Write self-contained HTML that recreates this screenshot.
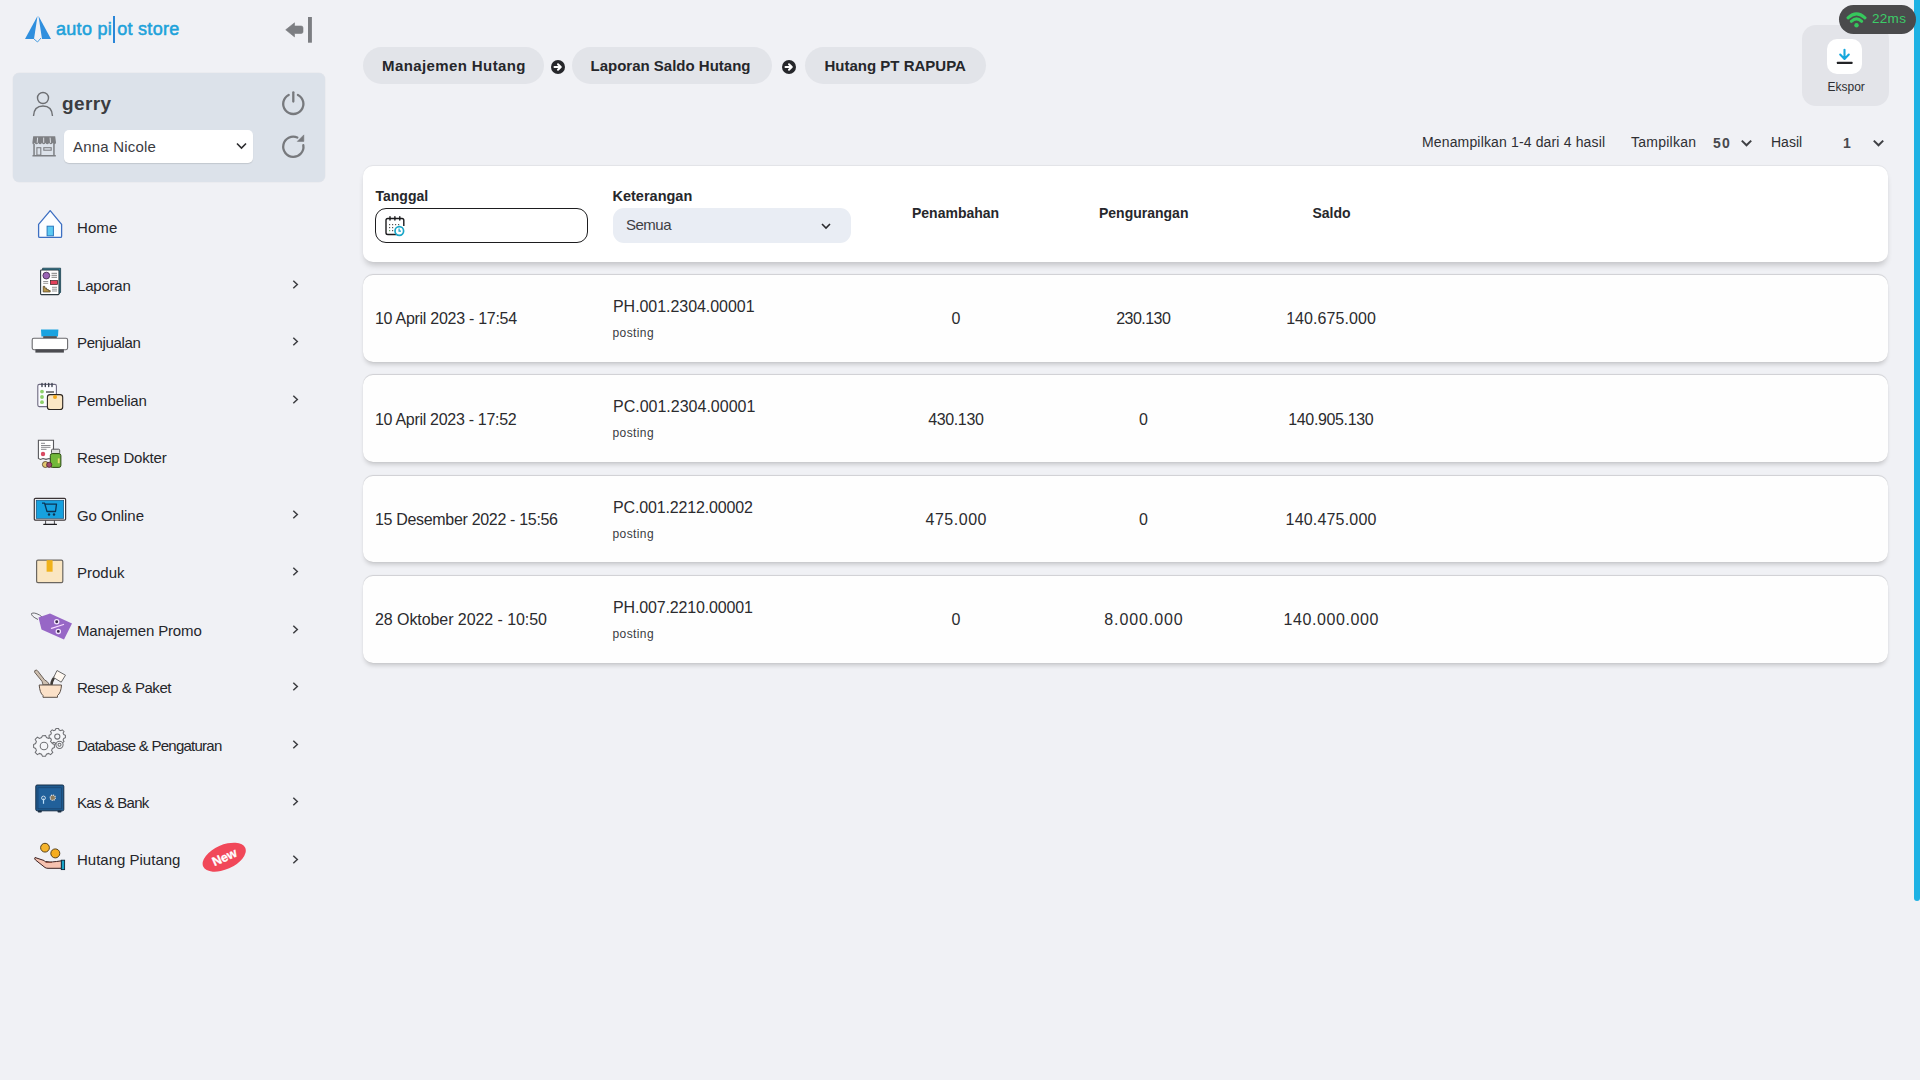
<!DOCTYPE html>
<html><head><meta charset="utf-8">
<style>
*{box-sizing:border-box;margin:0;padding:0}
html,body{width:1920px;height:1080px;overflow:hidden;background:#f0f1f5;font-family:"Liberation Sans",sans-serif;color:#2b2b2e}
.abs{position:absolute}
.t{position:absolute;white-space:nowrap;line-height:1}
/* sidebar */
.userpanel{left:13px;top:73px;width:312px;height:109px;background:#dce2ea;border-radius:6px;box-shadow:0 0 0 0.5px rgba(0,0,0,.04)}
.sel{left:64px;top:130px;width:189px;height:33px;background:#fff;border-radius:5px;box-shadow:0 1px 1px rgba(0,0,0,.12)}
.menu{font-size:15px;color:#25262a}
.chev{position:absolute;left:291px;width:9px;height:9px}
/* main */
.pill{position:absolute;top:47px;height:37px;background:#e2e4e9;border-radius:19px}
.pill span{position:absolute;top:11px;font-weight:700;font-size:15px;line-height:1;color:#26272b;white-space:nowrap}
.arrow{position:absolute;top:59.5px;width:14px;height:14px}
.card{position:absolute;left:363px;width:1525px;background:#fff;border-radius:10px;box-shadow:0 5px 6px -2px rgba(0,0,0,.2),0 -1px 1px rgba(0,0,0,.06)}
.row{background:#fefefe;box-shadow:0 4px 5px -2px rgba(0,0,0,.2),0 -0.5px 1px rgba(0,0,0,.14)}
.hd{font-weight:700;font-size:15px;color:#26272b}
.num{font-size:15px;color:#2b2b2e;text-align:center;width:160px}
</style></head>
<body>
<!-- logo -->
<svg class="abs" style="left:24px;top:15px" width="28" height="30" viewBox="0 0 28 30">
  <path d="M13.5 1 L1 24 L10 24 Z" fill="#2f8fde"/>
  <path d="M14.5 1 L27 24 L18 24 Z" fill="#2f8fde"/>
  <path d="M10 24 L13.5 27 L17 23" stroke="#4a9ee0" stroke-width="1" fill="none"/>
</svg>
<div class="t" style="left:56px;top:19.5px;font-size:18px;color:#1ea2da;font-weight:400;letter-spacing:0.3px;-webkit-text-stroke:0.55px #1ea2da">auto pi<span style="display:inline-block;width:5px;height:1px"></span>ot store</div>
<div class="abs" style="left:112.6px;top:16.3px;width:2px;height:27.2px;background:#2a86d8"></div>
<!-- collapse icon -->
<svg class="abs" style="left:284px;top:16px" width="30" height="28" viewBox="0 0 30 28">
  <path d="M1.7 13.8 L10.5 6.8 L10.5 10 L17.2 10 Q19 10 19 11.8 L19 15.7 Q19 17.5 17.2 17.5 L10.5 17.5 L10.5 20.9 Z" fill="#7c7e82" stroke="#7c7e82" stroke-width="0.6" stroke-linejoin="round"/>
  <rect x="24" y="1" width="3.9" height="25.7" fill="#7c7e82"/>
</svg>

<div class="abs userpanel"></div>
<!-- user icon -->
<svg class="abs" style="left:32px;top:91px" width="22" height="26" viewBox="0 0 22 26">
  <circle cx="11" cy="7" r="5.5" stroke="#6d6f73" stroke-width="1.4" fill="none"/>
  <path d="M1.5 25 Q2 15 11 15 Q20 15 20.5 25" stroke="#6d6f73" stroke-width="1.4" fill="none"/>
</svg>
<div class="t" style="left:62px;top:94px;font-size:19px;font-weight:700;color:#3b3c40;letter-spacing:0.4px">gerry</div>
<!-- power icon -->
<svg class="abs" style="left:281px;top:91px" width="25" height="25" viewBox="0 0 25 25">
  <path d="M7.67 3.9 A10.1 10.1 0 1 0 16.93 3.9" stroke="#77797d" stroke-width="2.3" fill="none" stroke-linecap="round"/>
  <line x1="12.3" y1="1.3" x2="12.3" y2="10.6" stroke="#77797d" stroke-width="2.3" stroke-linecap="round"/>
</svg>
<!-- store icon -->
<svg class="abs" style="left:28px;top:130px" width="32" height="32" viewBox="0 0 32 32">
  <path d="M5.2 6.2 H27.2 L28 12.6 Q28 14.2 26.4 14.2 Q24.9 14.2 24.7 12.8 Q24.5 14.2 22.9 14.2 Q21.3 14.2 21.1 12.8 Q20.9 14.2 19.3 14.2 Q17.7 14.2 17.5 12.8 Q17.3 14.2 15.7 14.2 Q14.1 14.2 13.9 12.8 Q13.7 14.2 12.1 14.2 Q10.5 14.2 10.3 12.8 Q10.1 14.2 8.5 14.2 Q6.9 14.2 6.7 12.8 Q6.5 14.2 5 14.2 Q4.4 14.2 4.4 12.6 Z" fill="#7d7f83"/>
  <path d="M9.6 7.6 L9.2 12.8 M15.7 7.6 V12.8 M22.1 7.6 L22.5 12.8" stroke="#e8ebf0" stroke-width="0.9"/>
  <rect x="5.3" y="14" width="1.5" height="11.2" fill="#7d7f83"/>
  <rect x="25.2" y="14" width="1.5" height="11.2" fill="#7d7f83"/>
  <rect x="8.9" y="17.7" width="3.9" height="7.4" fill="none" stroke="#7d7f83" stroke-width="1.1"/>
  <rect x="15.8" y="17.7" width="7.4" height="2.5" fill="none" stroke="#7d7f83" stroke-width="1.1"/>
  <rect x="4.4" y="25" width="23.5" height="1.5" rx="0.5" fill="#7d7f83"/>
</svg>
<div class="abs sel"></div>
<div class="t" style="left:73px;top:139px;font-size:15px;color:#3a3b3f;letter-spacing:0.2px">Anna Nicole</div>
<svg class="abs" style="left:236px;top:142px" width="11" height="8" viewBox="0 0 11 8"><path d="M1 1.5 L5.5 6 L10 1.5" stroke="#2b2b2e" stroke-width="1.6" fill="none"/></svg>
<!-- refresh -->
<svg class="abs" style="left:281px;top:134px" width="25" height="25" viewBox="0 0 25 25">
  <path d="M22.3 11.2 A10.1 10.1 0 1 1 16.3 3.5" stroke="#77797d" stroke-width="2.3" fill="none" stroke-linecap="round"/>
  <path d="M22.8 0.9 L22.8 7.4 L16.3 7.4 Z" fill="#77797d" stroke="#77797d" stroke-width="0.6" stroke-linejoin="round"/>
</svg>

<!-- MENU placeholder -->
<div class="t menu" style="left:77px;top:220.4px;letter-spacing:0.1px">Home</div>
<div class="t menu" style="left:77px;top:277.8px;letter-spacing:-0.2px">Laporan</div>
<svg class="chev" style="top:279.8px" viewBox="0 0 9 9"><path d="M2.3 0.8 L6.3 4.5 L2.3 8.2" stroke="#3c3d41" stroke-width="1.5" fill="none"/></svg>
<div class="t menu" style="left:77px;top:335.3px;letter-spacing:-0.37px">Penjualan</div>
<svg class="chev" style="top:337.3px" viewBox="0 0 9 9"><path d="M2.3 0.8 L6.3 4.5 L2.3 8.2" stroke="#3c3d41" stroke-width="1.5" fill="none"/></svg>
<div class="t menu" style="left:77px;top:392.8px;letter-spacing:-0.12px">Pembelian</div>
<svg class="chev" style="top:394.8px" viewBox="0 0 9 9"><path d="M2.3 0.8 L6.3 4.5 L2.3 8.2" stroke="#3c3d41" stroke-width="1.5" fill="none"/></svg>
<div class="t menu" style="left:77px;top:450.2px;letter-spacing:-0.18px">Resep Dokter</div>
<div class="t menu" style="left:77px;top:507.6px;letter-spacing:-0.07px">Go Online</div>
<svg class="chev" style="top:509.8px" viewBox="0 0 9 9"><path d="M2.3 0.8 L6.3 4.5 L2.3 8.2" stroke="#3c3d41" stroke-width="1.5" fill="none"/></svg>
<div class="t menu" style="left:77px;top:565.1px;letter-spacing:0px">Produk</div>
<svg class="chev" style="top:567.3px" viewBox="0 0 9 9"><path d="M2.3 0.8 L6.3 4.5 L2.3 8.2" stroke="#3c3d41" stroke-width="1.5" fill="none"/></svg>
<div class="t menu" style="left:77px;top:622.6px;letter-spacing:-0.14px">Manajemen Promo</div>
<svg class="chev" style="top:624.8px" viewBox="0 0 9 9"><path d="M2.3 0.8 L6.3 4.5 L2.3 8.2" stroke="#3c3d41" stroke-width="1.5" fill="none"/></svg>
<div class="t menu" style="left:77px;top:680.0px;letter-spacing:-0.47px">Resep &amp; Paket</div>
<svg class="chev" style="top:682.3px" viewBox="0 0 9 9"><path d="M2.3 0.8 L6.3 4.5 L2.3 8.2" stroke="#3c3d41" stroke-width="1.5" fill="none"/></svg>
<div class="t menu" style="left:77px;top:737.5px;letter-spacing:-0.74px">Database &amp; Pengaturan</div>
<svg class="chev" style="top:739.8px" viewBox="0 0 9 9"><path d="M2.3 0.8 L6.3 4.5 L2.3 8.2" stroke="#3c3d41" stroke-width="1.5" fill="none"/></svg>
<div class="t menu" style="left:77px;top:794.9px;letter-spacing:-0.67px">Kas &amp; Bank</div>
<svg class="chev" style="top:797.3px" viewBox="0 0 9 9"><path d="M2.3 0.8 L6.3 4.5 L2.3 8.2" stroke="#3c3d41" stroke-width="1.5" fill="none"/></svg>
<div class="t menu" style="left:77px;top:852.4px;letter-spacing:0px">Hutang Piutang</div>
<svg class="chev" style="top:854.8px" viewBox="0 0 9 9"><path d="M2.3 0.8 L6.3 4.5 L2.3 8.2" stroke="#3c3d41" stroke-width="1.5" fill="none"/></svg>
<!-- Home -->
<svg class="abs" style="left:28px;top:204px" width="44" height="40" viewBox="0 0 44 40">
  <path d="M22.2 6.6 L10.6 20.3 L10.6 32.2 Q10.6 33.4 11.8 33.4 L32.4 33.4 Q33.6 33.4 33.6 32.2 L33.6 20.3 Z" fill="#fbfdff" stroke="#3d6fc2" stroke-width="1.3" stroke-linejoin="round"/>
  <rect x="19.1" y="22.2" width="6.3" height="9.6" fill="#5ccaf2" stroke="#2879bf" stroke-width="1"/>
</svg>
<!-- Laporan -->
<svg class="abs" style="left:28px;top:260px" width="44" height="40" viewBox="0 0 44 40">
  <path d="M14.6 8.2 H32.6 V32.2 L30.5 34.5 H14.6 Z" fill="#2a7f99" stroke="#1f3d4a" stroke-width="0.8"/>
  <rect x="12.6" y="10" width="18.4" height="24.6" rx="0.8" fill="#fff" stroke="#2d3a40" stroke-width="1.1"/>
  <circle cx="18.3" cy="15.6" r="3.4" fill="#9a64b5" stroke="#3a2145" stroke-width="0.8"/>
  <path d="M23.5 13.3 H29 M23.5 15.3 H29 M23.5 17.3 H29" stroke="#707070" stroke-width="0.9"/>
  <rect x="22.4" y="20.6" width="7.2" height="3.8" fill="#e2405a" stroke="#3a1a20" stroke-width="0.7"/>
  <path d="M15.2 21.5 H20.2 M15.2 23.3 H20.2 M24 27.3 H29 M24 29.2 H29 M24 31 H29" stroke="#8a8a8a" stroke-width="0.9"/>
  <path d="M15.2 32 V26.3 H16.8 V28 H18.6 V29.5 H20.4 V30.5 H22.2 V32 Z" fill="#b8974e" stroke="#3a2c10" stroke-width="0.6"/>
</svg>
<!-- Penjualan -->
<svg class="abs" style="left:28px;top:320px" width="44" height="40" viewBox="0 0 44 40">
  <path d="M13 9.6 H30.4 L30 16.4 H13.4 Z" fill="#1aa3e0"/>
  <rect x="15.2" y="16.2" width="13.6" height="2.2" fill="#4a4a4e"/>
  <rect x="4.2" y="18.3" width="35.4" height="11.4" rx="1.6" fill="#fff" stroke="#6a6a6e" stroke-width="1.1"/>
  <rect x="7.4" y="29.3" width="28.5" height="3.3" fill="#4b4b50"/>
</svg>
<!-- Pembelian -->
<svg class="abs" style="left:28px;top:376px" width="44" height="40" viewBox="0 0 44 40">
  <rect x="9.8" y="8.4" width="18.6" height="22.2" rx="1.5" fill="#fbfbff" stroke="#6e6a80" stroke-width="1.1"/>
  <path d="M14 7.5 V10.6 M17.3 7.5 V10.6 M20.7 7.5 V10.6 M24 7.5 V10.6" stroke="#3e4450" stroke-width="1.4" stroke-linecap="round"/>
  <circle cx="14" cy="15.6" r="1.9" fill="#8fd06a"/>
  <circle cx="14" cy="21" r="1.9" fill="#8fd06a"/>
  <circle cx="14" cy="26.2" r="1.9" fill="#8fd06a"/>
  <path d="M18 16 H26" stroke="#333" stroke-width="1.2"/>
  <rect x="19.4" y="18.6" width="15.3" height="14.9" rx="2.6" fill="#fbe7c4" stroke="#2c2620" stroke-width="1.1"/>
  <circle cx="27" cy="21" r="2" fill="#f2a81a"/>
</svg>
<!-- Resep Dokter -->
<svg class="abs" style="left:28px;top:434px" width="44" height="40" viewBox="0 0 44 40">
  <path d="M10.4 6.2 H25.5 V24.5 L23.5 25.4 L21 24.5 L18 25.4 L15 24.5 L12.5 25.4 L10.4 24.5 Z" fill="#fff" stroke="#58585c" stroke-width="1.1"/>
  <path d="M13 9.3 H17 M13 11.5 H22.5 M13 13.3 H22.5 M13 15.3 H18.5" stroke="#7c7c80" stroke-width="0.9"/>
  <circle cx="15" cy="20" r="2.2" fill="#d94a62"/>
  <rect x="23.5" y="15.2" width="8.2" height="4.4" rx="1" fill="#dcdcdc" stroke="#58585c" stroke-width="1"/>
  <rect x="22.3" y="19.6" width="10.6" height="13.8" rx="2" fill="#72b83a" stroke="#2d4a16" stroke-width="1"/>
  <rect x="29.8" y="24.4" width="1.8" height="4.8" fill="#e6e070"/>
  <circle cx="17.4" cy="30.5" r="3" fill="#e2c870" stroke="#4a3a20" stroke-width="0.8"/>
  <circle cx="21.2" cy="30.8" r="2.6" fill="#a04a6a" stroke="#4a2030" stroke-width="0.8"/>
</svg>
<!-- Go Online -->
<svg class="abs" style="left:28px;top:492px" width="44" height="40" viewBox="0 0 44 40">
  <rect x="6.3" y="6.3" width="31.3" height="21.8" rx="1.2" fill="#fff" stroke="#3b3436" stroke-width="1.2"/>
  <rect x="8.2" y="8.2" width="27.5" height="18.2" fill="#16a1df" stroke="#0f3f66" stroke-width="0.6"/>
  <path d="M14 11.2 H16.6 L19 19.5 H27.5 L28.5 12.2 H17" stroke="#0c3454" stroke-width="1.3" fill="none" stroke-linejoin="round"/>
  <circle cx="21" cy="22.5" r="1.2" fill="#0c3454"/><circle cx="26" cy="22.5" r="1.2" fill="#0c3454"/>
  <path d="M17.6 28.2 V32 M26.4 28.2 V32" stroke="#4a4a4e" stroke-width="1"/>
  <rect x="15.2" y="31.8" width="13.8" height="1.2" rx="0.6" fill="#1d1d20"/>
</svg>
<!-- Produk -->
<svg class="abs" style="left:28px;top:550px" width="44" height="40" viewBox="0 0 44 40">
  <rect x="8.6" y="10.2" width="26.2" height="22.4" rx="1.4" fill="#fae6c2" stroke="#6a6660" stroke-width="1.2"/>
  <rect x="18.6" y="10.2" width="6" height="11.5" fill="#f0b21a"/>
</svg>
<!-- Promo -->
<svg class="abs" style="left:28px;top:606px" width="44" height="40" viewBox="0 0 44 40">
  <path d="M3.5 7.5 Q6 6 11.5 9 L14 11" stroke="#6a6a70" stroke-width="1" fill="none"/>
  <path d="M3.5 7.5 Q2.8 10 10 13.5" stroke="#6a6a70" stroke-width="1" fill="none"/>
  <path d="M10.5 11.5 L22 7.5 L44 17.5 L36 33.5 L13.5 23.5 Z" fill="#9767c6"/>
  <circle cx="28.7" cy="15.8" r="2.1" fill="#3a2a4a" stroke="#f4e4ff" stroke-width="1.3"/>
  <circle cx="30.3" cy="25.4" r="2.1" fill="#3a2a4a" stroke="#f4e4ff" stroke-width="1.3"/>
  <path d="M23.5 22.3 L35.5 18.5" stroke="#f8d8ff" stroke-width="1.3" stroke-linecap="round"/>
</svg>
<!-- Resep & Paket -->
<svg class="abs" style="left:28px;top:664px" width="44" height="40" viewBox="0 0 44 40">
  <path d="M6.6 8.2 Q6.2 6 8.4 6.1 Q9.2 6.3 9.8 7.1 L16.5 15.8 Q19.5 17.2 21.5 20.6 L15 21 Q14.6 19 14 17.3 Z" fill="#cdbfb0" stroke="#6a6058" stroke-width="1"/>
  <path d="M23.5 20.5 Q24 15 27.5 12.5" stroke="#3e3a36" stroke-width="2.6" stroke-linecap="round"/>
  <path d="M29 6.5 L37.5 11.2 L33.2 18.2 L25.6 13.5 Z" fill="#fff8f0" stroke="#6a6a6a" stroke-width="1" stroke-linejoin="round"/>
  <path d="M11.2 21 H33.5 Q33 29 29.5 31.5 L29.5 33.3 H15 L15 31.5 Q11.8 29 11.2 21 Z" fill="#fbe1c8" stroke="#5c5048" stroke-width="1"/>
</svg>
<!-- Database -->
<svg class="abs" style="left:28px;top:722px" width="44" height="40" viewBox="0 0 44 40">
  <g fill="#f4f5f8" stroke="#6f7074" stroke-width="1.05">
  <path d="M14.5 13.8 L17.5 13.6 L18.5 15.6 L20.5 16.4 L22.6 15.2 L24.8 17.4 L23.6 19.5 L24.4 21.5 L26.4 22.5 L26.4 25.5 L24.4 26.4 L23.6 28.4 L24.8 30.5 L22.6 32.6 L20.5 31.4 L18.5 32.2 L17.5 34.2 L14.5 34.2 L13.5 32.2 L11.5 31.4 L9.4 32.6 L7.2 30.5 L8.4 28.4 L7.6 26.4 L5.6 25.5 L5.6 22.5 L7.6 21.5 L8.4 19.5 L7.2 17.4 L9.4 15.2 L11.5 16.4 L13.5 15.6 Z"/>
  <circle cx="16" cy="24" r="3.8"/>
  <path d="M28 6.5 L30.5 6.5 L31.2 8 L32.8 8.7 L34.3 7.8 L36 9.5 L35.1 11 L35.8 12.6 L37.4 13.3 L37.4 15.7 L35.8 16.4 L35.1 18 L36 19.5 L34.3 21.2 L32.8 20.3 L31.2 21 L30.5 22.5 L28 22.5 L27.3 21 L25.7 20.3 L24.2 21.2 L22.5 19.5 L23.4 18 L22.7 16.4 L21.1 15.7 L21.1 13.3 L22.7 12.6 L23.4 11 L22.5 9.5 L24.2 7.8 L25.7 8.7 L27.3 8 Z"/>
  <circle cx="29.3" cy="14.5" r="2.6"/>
  <circle cx="31.5" cy="22.8" r="3.6"/>
  <circle cx="31.5" cy="22.8" r="1.5"/>
  </g>
</svg>
<!-- Kas & Bank -->
<svg class="abs" style="left:28px;top:780px" width="44" height="40" viewBox="0 0 44 40">
  <rect x="7.8" y="5" width="28" height="25.8" rx="1.3" fill="#1f5a8e" stroke="#162e48" stroke-width="1"/>
  <rect x="10" y="7.8" width="23.6" height="21" fill="#21609a" stroke="#183e66" stroke-width="0.6"/>
  <rect x="9.8" y="30.4" width="4" height="2.2" rx="0.8" fill="#1b2f44"/>
  <rect x="29.5" y="30.4" width="4" height="2.2" rx="0.8" fill="#1b2f44"/>
  <circle cx="15.5" cy="18" r="1.9" fill="none" stroke="#d8e4ee" stroke-width="0.9"/>
  <path d="M15.5 18.5 V23.8" stroke="#b8dcf8" stroke-width="1.2"/>
  <circle cx="24.8" cy="17.7" r="2.6" fill="#8a7a5a" stroke="#d8dde4" stroke-width="1.2" stroke-dasharray="1.2 0.8"/>
</svg>
<!-- Hutang Piutang -->
<svg class="abs" style="left:28px;top:836px" width="44" height="40" viewBox="0 0 44 40">
  <circle cx="17" cy="11.7" r="4.4" fill="#f5b42c" stroke="#4a3410" stroke-width="0.9"/>
  <circle cx="27.3" cy="17.4" r="4.5" fill="#f6ad1e" stroke="#4a3410" stroke-width="0.9"/>
  <path d="M7 21.5 Q6 22.8 7.5 24 L17 31.5 Q18 32.3 20 32.3 L33.5 32.3 L33.5 24.8 L28.5 25.5 Q24 26 22 26 L17.5 25.5 Q16.5 25.2 16 24.5 Z" fill="#f6c2b0" stroke="#3a2020" stroke-width="1"/>
  <path d="M17.5 26.5 H24" stroke="#8a4a3a" stroke-width="0.9"/>
  <rect x="33.3" y="24.2" width="3.3" height="9.4" fill="#19a4c8" stroke="#0c2436" stroke-width="0.9"/>
</svg>
<!-- New badge -->
<svg class="abs" style="left:200px;top:840px" width="50" height="34" viewBox="0 0 50 34">
  <ellipse cx="24.2" cy="17.2" rx="23" ry="12.2" transform="rotate(-24 24.2 17.2)" fill="#f14859"/>
  <text x="24.4" y="21.5" transform="rotate(-24 24.4 17.2)" text-anchor="middle" font-family="Liberation Sans" font-weight="700" font-size="12.5" fill="#fff" stroke="#fff" stroke-width="0.3">New</text>
</svg>


<!-- breadcrumb -->
<div class="pill" style="left:363px;width:181px"><span style="left:19px;letter-spacing:0.4px">Manajemen Hutang</span></div>
<svg class="arrow" style="left:550.5px" viewBox="0 0 14 14"><circle cx="7" cy="7" r="7" fill="#26272b"/><path d="M3.5 7 H9.5 M7 4.3 L9.8 7 L7 9.7" stroke="#fff" stroke-width="2" fill="none" stroke-linecap="round" stroke-linejoin="round"/></svg>
<div class="pill" style="left:572px;width:199.5px"><span style="left:18.5px">Laporan Saldo Hutang</span></div>
<svg class="arrow" style="left:781.5px" viewBox="0 0 14 14"><circle cx="7" cy="7" r="7" fill="#26272b"/><path d="M3.5 7 H9.5 M7 4.3 L9.8 7 L7 9.7" stroke="#fff" stroke-width="2" fill="none" stroke-linecap="round" stroke-linejoin="round"/></svg>
<div class="pill" style="left:805px;width:181px"><span style="left:19.5px">Hutang PT RAPUPA</span></div>

<!-- scrollbar -->
<div class="abs" style="left:1914px;top:-10px;width:6px;height:911px;background:#1eb2e4;border-radius:0 0 3px 3px"></div>
<!-- pagination -->
<div class="t" style="left:1422px;top:134.5px;font-size:14px;color:#2e2f33;letter-spacing:0.15px">Menampilkan 1-4 dari 4 hasil</div>
<div class="t" style="left:1631px;top:134.5px;font-size:14px;color:#2e2f33;letter-spacing:0.25px">Tampilkan</div>
<div class="t" style="left:1713px;top:135.5px;font-size:14px;font-weight:700;color:#48494d;letter-spacing:1.2px">50</div>
<svg class="abs" style="left:1740px;top:138px" width="13" height="10" viewBox="0 0 13 10"><path d="M1.8 2.6 L6.5 7.3 L11.2 2.6" stroke="#3f4044" stroke-width="2" fill="none"/></svg>
<div class="t" style="left:1771px;top:134.5px;font-size:14px;color:#2e2f33">Hasil</div>
<div class="t" style="left:1843px;top:135.5px;font-size:14px;font-weight:700;color:#48494d">1</div>
<svg class="abs" style="left:1872px;top:138px" width="13" height="10" viewBox="0 0 13 10"><path d="M1.8 2.6 L6.5 7.3 L11.2 2.6" stroke="#3f4044" stroke-width="2" fill="none"/></svg>

<!-- export -->
<div class="abs" style="left:1802px;top:25px;width:87px;height:81px;background:#e3e4e9;border-radius:14px"></div>
<div class="abs" style="left:1827px;top:39px;width:35px;height:35px;background:#fff;border-radius:10px"></div>
<svg class="abs" style="left:1834px;top:46px" width="21" height="21" viewBox="0 0 21 21">
  <path d="M10.5 3.8 V12.6 M6.2 8.6 L10.5 12.9 L14.8 8.6" stroke="#15a8dd" stroke-width="2.1" fill="none" stroke-linecap="round" stroke-linejoin="round"/>
  <rect x="2.9" y="15.8" width="15.6" height="2.1" rx="0.5" fill="#222326"/>
</svg>
<div class="t" style="left:1827.5px;top:80.5px;font-size:12px;color:#2e2f33">Ekspor</div>

<!-- network -->
<div class="abs" style="left:1838.5px;top:4.5px;width:77px;height:29px;background:#4a4a4c;border-radius:15px"></div>
<svg class="abs" style="left:1846px;top:11px" width="21" height="17" viewBox="0 0 21 17">
  <path d="M2 6.8 Q10.5 -1.2 19 6.8" stroke="#36c75c" stroke-width="3" fill="none" stroke-linecap="round"/>
  <path d="M5.3 10.3 Q10.5 5.5 15.7 10.3" stroke="#36c75c" stroke-width="3" fill="none" stroke-linecap="round"/>
  <circle cx="10.5" cy="14.3" r="2.2" fill="#36c75c"/>
</svg>
<div class="t" style="left:1872px;top:11.5px;font-size:13.5px;color:#3ccc68;letter-spacing:0.3px">22ms</div>


<!-- header card -->
<div class="card" style="top:166px;height:96px"></div>
<div class="t hd" style="left:375.5px;top:189px;font-size:14px">Tanggal</div>
<div class="abs" style="left:375px;top:208px;width:213px;height:35px;border:1.6px solid #1d1d1f;border-radius:11px;background:#fff"></div>
<svg class="abs" style="left:384px;top:215px" width="22" height="22" viewBox="0 0 22 22">
  <path d="M12.5 19.5 H3.8 Q2 19.5 2 17.7 V5.3 Q2 3.5 3.8 3.5 H18 Q19.8 3.5 19.8 5.3 V11" stroke="#1b1b1d" stroke-width="1.4" fill="none"/>
  <path d="M6 1.8 V5 M10.9 1.8 V5 M15.8 1.8 V5" stroke="#1b1b1d" stroke-width="1.4" stroke-linecap="round"/>
  <g fill="#555"><rect x="5" y="9" width="1.2" height="1.2"/><rect x="8" y="9" width="1.2" height="1.2"/><rect x="11" y="9" width="1.2" height="1.2"/><rect x="14" y="9" width="1.2" height="1.2"/><rect x="5" y="12" width="1.2" height="1.2"/><rect x="8" y="12" width="1.2" height="1.2"/><rect x="5" y="15" width="1.2" height="1.2" fill="#6a6"/><rect x="8" y="15" width="1.2" height="1.2"/></g>
  <circle cx="15.3" cy="16" r="4.3" fill="#fff" stroke="#1aa6c8" stroke-width="1.7"/>
  <path d="M15.1 13.6 V16.2 H17" stroke="#1aa6c8" stroke-width="1.2" fill="none"/>
</svg>
<div class="t hd" style="left:612.5px;top:189px;font-size:14.5px">Keterangan</div>
<div class="abs" style="left:612.5px;top:208px;width:238px;height:35px;background:#e9edf4;border-radius:11px"></div>
<div class="t" style="left:626px;top:217px;font-size:15px;color:#3f4044;letter-spacing:-0.5px">Semua</div>
<svg class="abs" style="left:820px;top:221px" width="12" height="10" viewBox="0 0 12 10"><path d="M2 3 L6 7 L10 3" stroke="#2b2b2e" stroke-width="1.6" fill="none"/></svg>
<div class="t hd" style="left:912px;top:206px;font-size:14px">Penambahan</div>
<div class="t hd" style="left:1099px;top:206px;font-size:14px">Pengurangan</div>
<div class="t hd" style="left:1312.5px;top:206px;font-size:14px">Saldo</div>
<div class="card row" style="top:275px;height:86.5px"></div>
<div class="t" style="left:375px;top:311.3px;font-size:16px;color:#2b2b2e;letter-spacing:-0.28px">10 April 2023 - 17:54</div>
<div class="t" style="left:613px;top:299.1px;font-size:16px;color:#2b2b2e;letter-spacing:-0.05px">PH.001.2304.00001</div>
<div class="t" style="left:612.5px;top:327.1px;font-size:12px;color:#3a3b3f;letter-spacing:0.4px">posting</div>
<div class="t num" style="left:876px;top:311.3px;font-size:16px;letter-spacing:0px;text-indent:0px">0</div>
<div class="t num" style="left:1063.5px;top:311.3px;font-size:16px;letter-spacing:-0.52px;text-indent:-0.52px">230.130</div>
<div class="t num" style="left:1251px;top:311.3px;font-size:16px;letter-spacing:0.07px;text-indent:0.07px">140.675.000</div>
<div class="card row" style="top:375.3px;height:86.5px"></div>
<div class="t" style="left:375px;top:411.6px;font-size:16px;color:#2b2b2e;letter-spacing:-0.3px">10 April 2023 - 17:52</div>
<div class="t" style="left:613px;top:399.4px;font-size:16px;color:#2b2b2e;letter-spacing:0.0px">PC.001.2304.00001</div>
<div class="t" style="left:612.5px;top:427.4px;font-size:12px;color:#3a3b3f;letter-spacing:0.4px">posting</div>
<div class="t num" style="left:876px;top:411.6px;font-size:16px;letter-spacing:-0.35px;text-indent:-0.35px">430.130</div>
<div class="t num" style="left:1063.5px;top:411.6px;font-size:16px;letter-spacing:0px;text-indent:0px">0</div>
<div class="t num" style="left:1251px;top:411.6px;font-size:16px;letter-spacing:-0.36px;text-indent:-0.36px">140.905.130</div>
<div class="card row" style="top:475.6px;height:86.5px"></div>
<div class="t" style="left:375px;top:511.9px;font-size:16px;color:#2b2b2e;letter-spacing:-0.32px">15 Desember 2022 - 15:56</div>
<div class="t" style="left:613px;top:499.7px;font-size:16px;color:#2b2b2e;letter-spacing:-0.15px">PC.001.2212.00002</div>
<div class="t" style="left:612.5px;top:527.7px;font-size:12px;color:#3a3b3f;letter-spacing:0.4px">posting</div>
<div class="t num" style="left:876px;top:511.9px;font-size:16px;letter-spacing:0.52px;text-indent:0.52px">475.000</div>
<div class="t num" style="left:1063.5px;top:511.9px;font-size:16px;letter-spacing:0px;text-indent:0px">0</div>
<div class="t num" style="left:1251px;top:511.9px;font-size:16px;letter-spacing:0.19px;text-indent:0.19px">140.475.000</div>
<div class="card row" style="top:576px;height:86.5px"></div>
<div class="t" style="left:375px;top:612.3px;font-size:16px;color:#2b2b2e;letter-spacing:-0.07px">28 Oktober 2022 - 10:50</div>
<div class="t" style="left:613px;top:600.1px;font-size:16px;color:#2b2b2e;letter-spacing:-0.15px">PH.007.2210.00001</div>
<div class="t" style="left:612.5px;top:628.1px;font-size:12px;color:#3a3b3f;letter-spacing:0.4px">posting</div>
<div class="t num" style="left:876px;top:612.3px;font-size:16px;letter-spacing:0px;text-indent:0px">0</div>
<div class="t num" style="left:1063.5px;top:612.3px;font-size:16px;letter-spacing:0.9px;text-indent:0.9px">8.000.000</div>
<div class="t num" style="left:1251px;top:612.3px;font-size:16px;letter-spacing:0.59px;text-indent:0.59px">140.000.000</div>
</body></html>
